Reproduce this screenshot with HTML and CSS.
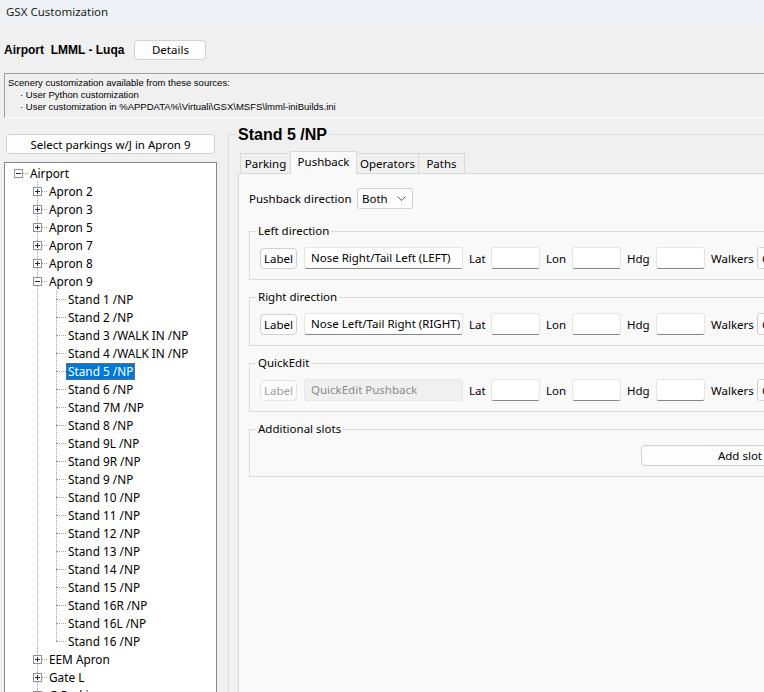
FILE: index.html
```html
<!DOCTYPE html>
<html lang="en">
<head>
  <meta charset="UTF-8" />
  <title>GSX Customization</title>
  <link rel="stylesheet" href="styles.css">
</head>
<body>
  <div class="titlebar">GSX Customization</div>

  <div class="airport">
    <h2>Airport&nbsp; LMML - Luqa</h2>
    <button class="btn details">Details</button>
  </div>

  <div class="sources">
    <div>Scenery customization available from these sources:</div>
    <div class="src">· User Python customization</div>
    <div class="src">· User customization in %APPDATA%\Virtuali\GSX\MSFS\lmml-iniBuilds.ini</div>
  </div>

  <div class="main">
    <div class="side">
      <button class="btn select">Select parkings w/J in Apron 9</button>
      <div class="tree">
        <div class="row lv0"><span class="conn"><i class="exp"></i></span><span class="lbl">Airport</span></div>
        <div class="kids k1">
          <div class="row lv1"><span class="conn"><i class="exp plus"></i></span><span class="lbl">Apron 2</span></div>
          <div class="row lv1"><span class="conn"><i class="exp plus"></i></span><span class="lbl">Apron 3</span></div>
          <div class="row lv1"><span class="conn"><i class="exp plus"></i></span><span class="lbl">Apron 5</span></div>
          <div class="row lv1"><span class="conn"><i class="exp plus"></i></span><span class="lbl">Apron 7</span></div>
          <div class="row lv1"><span class="conn"><i class="exp plus"></i></span><span class="lbl">Apron 8</span></div>
          <div class="row lv1"><span class="conn"><i class="exp"></i></span><span class="lbl">Apron 9</span></div>
          <div class="kids k2">
            <div class="row lv2"><span class="conn leaf"></span><span class="lbl">Stand 1 /NP</span></div>
            <div class="row lv2"><span class="conn leaf"></span><span class="lbl">Stand 2 /NP</span></div>
            <div class="row lv2"><span class="conn leaf"></span><span class="lbl">Stand 3 /WALK IN /NP</span></div>
            <div class="row lv2"><span class="conn leaf"></span><span class="lbl">Stand 4 /WALK IN /NP</span></div>
            <div class="row lv2"><span class="conn leaf"></span><span class="lbl sel">Stand 5 /NP</span></div>
            <div class="row lv2"><span class="conn leaf"></span><span class="lbl">Stand 6 /NP</span></div>
            <div class="row lv2"><span class="conn leaf"></span><span class="lbl">Stand 7M /NP</span></div>
            <div class="row lv2"><span class="conn leaf"></span><span class="lbl">Stand 8 /NP</span></div>
            <div class="row lv2"><span class="conn leaf"></span><span class="lbl">Stand 9L /NP</span></div>
            <div class="row lv2"><span class="conn leaf"></span><span class="lbl">Stand 9R /NP</span></div>
            <div class="row lv2"><span class="conn leaf"></span><span class="lbl">Stand 9 /NP</span></div>
            <div class="row lv2"><span class="conn leaf"></span><span class="lbl">Stand 10 /NP</span></div>
            <div class="row lv2"><span class="conn leaf"></span><span class="lbl">Stand 11 /NP</span></div>
            <div class="row lv2"><span class="conn leaf"></span><span class="lbl">Stand 12 /NP</span></div>
            <div class="row lv2"><span class="conn leaf"></span><span class="lbl">Stand 13 /NP</span></div>
            <div class="row lv2"><span class="conn leaf"></span><span class="lbl">Stand 14 /NP</span></div>
            <div class="row lv2"><span class="conn leaf"></span><span class="lbl">Stand 15 /NP</span></div>
            <div class="row lv2"><span class="conn leaf"></span><span class="lbl">Stand 16R /NP</span></div>
            <div class="row lv2"><span class="conn leaf"></span><span class="lbl">Stand 16L /NP</span></div>
            <div class="row lv2"><span class="conn leaf"></span><span class="lbl">Stand 16 /NP</span></div>
          </div>
          <div class="row lv1"><span class="conn"><i class="exp plus"></i></span><span class="lbl">EEM Apron</span></div>
          <div class="row lv1"><span class="conn"><i class="exp plus"></i></span><span class="lbl">Gate L</span></div>
          <div class="row lv1"><span class="conn"><i class="exp plus"></i></span><span class="lbl">G Parking</span></div>
          <div class="row lv1"><span class="conn"><i class="exp plus"></i></span><span class="lbl">Terminal</span></div>
        </div>
      </div>
    </div>

    <div class="content">
      <fieldset class="stand">
        <legend>Stand 5 /NP</legend>

        <div class="tabs">
          <div class="tab w-parking">Parking</div>
          <div class="tab w-pushback active">Pushback</div>
          <div class="tab w-operators">Operators</div>
          <div class="tab w-paths">Paths</div>
        </div>

        <div class="panel">
          <div class="dirRow">
            <span class="dirLabel">Pushback direction</span>
            <div class="combo small">
              <span>Both</span>
              <svg width="9" height="5" viewBox="0 0 9 5"><path d="M0.5 0.5 L4.5 4.5 L8.5 0.5" fill="none" stroke="#5a5a5a" stroke-width="1"/></svg>
            </div>
          </div>

          <fieldset class="group">
            <legend>Left direction</legend>
            <div class="fields">
              <button class="btn lab">Label</button>
              <div class="input name">Nose Right/Tail Left (LEFT)</div>
              <span class="cap lat">Lat</span><div class="input coord"></div>
              <span class="cap lon">Lon</span><div class="input coord"></div>
              <span class="cap hdg">Hdg</span><div class="input coord"></div>
              <span class="cap walk">Walkers</span><div class="combo walkers">Gate</div>
            </div>
          </fieldset>

          <fieldset class="group">
            <legend>Right direction</legend>
            <div class="fields">
              <button class="btn lab">Label</button>
              <div class="input name">Nose Left/Tail Right (RIGHT)</div>
              <span class="cap lat">Lat</span><div class="input coord"></div>
              <span class="cap lon">Lon</span><div class="input coord"></div>
              <span class="cap hdg">Hdg</span><div class="input coord"></div>
              <span class="cap walk">Walkers</span><div class="combo walkers">Gate</div>
            </div>
          </fieldset>

          <fieldset class="group">
            <legend>QuickEdit</legend>
            <div class="fields">
              <button class="btn lab disabled">Label</button>
              <div class="input name disabled">QuickEdit Pushback</div>
              <span class="cap lat">Lat</span><div class="input coord"></div>
              <span class="cap lon">Lon</span><div class="input coord"></div>
              <span class="cap hdg">Hdg</span><div class="input coord"></div>
              <span class="cap walk">Walkers</span><div class="combo walkers">Gate</div>
            </div>
          </fieldset>

          <fieldset class="group">
            <legend>Additional slots</legend>
            <div class="fields">
              <button class="btn addSlot">Add slot</button>
            </div>
          </fieldset>
        </div>
      </fieldset>
    </div>
  </div>
</body>
</html>
```

FILE: styles.css
```css
body {
  margin: 0;
  width: 764px;
  height: 692px;
  overflow: hidden;
  background: #f0f0f0;
  font-family: 'Noto Sans', sans-serif;
  font-size: 11.5px;
  color: #000;
}

.titlebar {
  height: 26px;
  line-height: 24px;
  padding-left: 6px;
  background: #eef2f7;
  color: #1b1b1b;
}

.btn {
  box-sizing: border-box;
  height: 20px;
  padding: 0;
  border: 1px solid #d0d0d0;
  border-radius: 4px;
  background: #fdfdfd;
  font: inherit;
  color: #000;
}

.airport {
  display: flex;
  align-items: center;
  height: 47px;
  padding-left: 4px;
}

.airport h2 {
  margin: 0;
  font: bold 12px 'Liberation Sans', sans-serif;
}

.details {
  width: 72px;
  margin-left: 10px;
}

.sources {
  height: 40px;
  margin-left: 4px;
  padding: 3px 0 0 3px;
  border-top: 1px solid #a0a0a0;
  border-left: 1px solid #a0a0a0;
  border-bottom: 1px solid #fff;
  font: 9.5px 'Liberation Sans', sans-serif;
  line-height: 12px;
}

.sources .src {
  padding-left: 12px;
}

.main {
  display: flex;
}

/* left column: select button + tree */
.side {
  width: 213px;
  margin-left: 4px;
  padding-top: 16px;
  flex-shrink: 0;
}

.select {
  width: 209px;
  margin-left: 2px;
}

.tree {
  box-sizing: border-box;
  width: 213px;
  height: 560px;
  margin-top: 8px;
  padding-top: 1px;
  border: 1px solid #828790;
  background: #fff;
}

.row {
  display: flex;
  align-items: center;
  height: 18px;
}

.lv0 { padding-left: 4px; }
.lv1 { padding-left: 23px; }
.lv2 { padding-left: 42px; }

.conn {
  position: relative;
  width: 19px;
  height: 18px;
  flex-shrink: 0;
}

.conn::after {
  content: '';
  position: absolute;
  top: 9px;
  left: 14px;
  right: 0;
  border-top: 1px dotted #a0a0a0;
}

.conn.leaf::after {
  left: 9px;
}

.exp {
  position: absolute;
  z-index: 1;
  left: 5px;
  top: 5px;
  box-sizing: border-box;
  width: 9px;
  height: 9px;
  border: 1px solid #919191;
  background: #fff;
}

.exp::before {
  content: '';
  position: absolute;
  left: 1px;
  top: 3px;
  width: 5px;
  height: 1px;
  background: #1c2a5c;
}

.exp.plus::after {
  content: '';
  position: absolute;
  left: 3px;
  top: 1px;
  width: 1px;
  height: 5px;
  background: #1c2a5c;
}

.lbl {
  padding: 0 2px;
  line-height: 17px;
  font-size: 11.8px;
  white-space: nowrap;
}

.lbl.sel {
  background: #0078d7;
  color: #fff;
  outline: 1px dotted #b5651d;
  outline-offset: -1px;
}

.kids {
  position: relative;
}

.kids::before {
  content: '';
  position: absolute;
  top: 0;
  bottom: 9px;
  border-left: 1px dotted #a0a0a0;
}

.k1::before { left: 32px; }
.k2::before { left: 51px; }

/* right side */
.content {
  margin-left: 11px;
  padding-top: 7px;
}

fieldset {
  margin: 0;
  padding: 0;
  min-width: 0;
  border: 1px solid #dcdcdc;
}

.stand {
  width: 620px;
}

.stand > legend {
  margin-left: 7px;
  padding: 0 2px;
  font: bold 16px 'Liberation Sans', sans-serif;
  line-height: 19px;
}

.tabs {
  display: flex;
  align-items: flex-end;
  height: 23px;
  margin: 6px 0 0 9px;
  padding-left: 2px;
}

.tab {
  box-sizing: border-box;
  height: 20px;
  margin-left: -1px;
  border: 1px solid #d9d9d9;
  border-bottom: none;
  background: #f0f0f0;
  text-align: center;
  line-height: 19px;
}

.tab.active {
  position: relative;
  z-index: 1;
  height: 23px;
  margin-bottom: -1px;
  background: #f9f9f9;
  line-height: 19px;
}

.w-parking { width: 51px; margin-left: 0; }
.w-pushback { width: 67px; }
.w-operators { width: 63px; }
.w-paths { width: 47px; }

.panel {
  height: 600px;
  margin-left: 9px;
  padding: 14px 0 0 10px;
  border-top: 1px solid #d9d9d9;
  border-left: 1px solid #d9d9d9;
  background: #f9f9f9;
}

.dirRow {
  display: flex;
  align-items: center;
}

.dirLabel {
  width: 108px;
}

.combo {
  box-sizing: border-box;
  display: flex;
  align-items: center;
  justify-content: space-between;
  height: 22px;
  padding: 0 6px 0 4px;
  border: 1px solid #d0d0d0;
  border-radius: 3px;
  background: #fdfdfd;
  white-space: nowrap;
}

.combo.small {
  width: 56px;
  height: 21px;
}

.group {
  width: 620px;
  margin-top: 9px;
  padding-bottom: 10px;
}

.dirRow + .group {
  margin-top: 14px;
}

.group > legend {
  margin-left: 6px;
  padding: 0 2px;
  line-height: 16px;
}

.fields {
  display: flex;
  align-items: center;
  padding: 8px 0 0 10px;
}

.lab {
  width: 37px;
  height: 21px;
}

.lab.disabled {
  color: #a0a0a0;
  border-color: #e3e3e3;
}

.input {
  box-sizing: border-box;
  height: 22px;
  padding: 0 6px;
  border: 1px solid #e5e5e5;
  border-bottom-color: #868686;
  border-radius: 3px;
  background: #fff;
  line-height: 20px;
  white-space: nowrap;
}

.input.name {
  width: 159px;
  margin-left: 7px;
}

.input.disabled {
  border-color: #e8e8e8;
  background: #f0f0f0;
  color: #8a8a8a;
}

.input.coord {
  width: 49px;
}

.cap {
  margin-left: 6px;
}

.cap.lat { width: 22px; }
.cap.lon { width: 26px; }
.cap.hdg { width: 29px; }
.cap.walk { width: 46px; }

.combo.walkers {
  width: 90px;
}

.addSlot {
  width: 198px;
  height: 21px;
  margin-left: 381px;
}
```
